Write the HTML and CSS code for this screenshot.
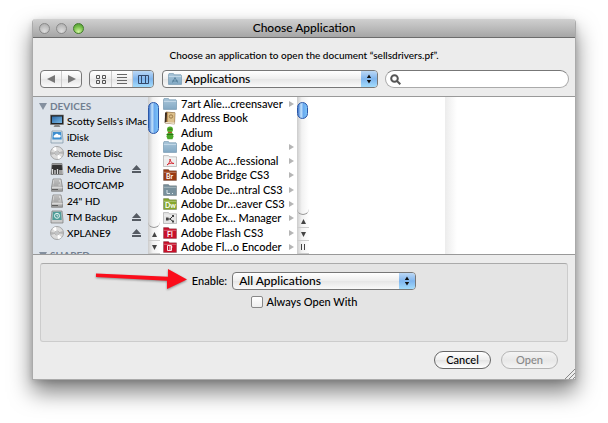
FILE: index.html
```html
<!DOCTYPE html>
<html lang="en">
<head>
    <meta charset="UTF-8">
    <meta name="viewport" content="width=device-width, initial-scale=1.0">
    <title>Choose Application</title>
    <link rel="stylesheet" href="styles.css">
</head>
<body>
    <!-- shared icons -->
    <svg class="defs" aria-hidden="true">
        <linearGradient id="folderFill" x2="0" y2="1"><stop stop-color="#a9c6da"/><stop offset="1" stop-color="#83a9c4"/></linearGradient>
        <linearGradient id="screenFill" x2="1" y2="1"><stop stop-color="#2c6aa8"/><stop offset="1" stop-color="#79b9e6"/></linearGradient>
        <linearGradient id="metalFill" x2="0" y2="1"><stop stop-color="#e4e4e4"/><stop offset="1" stop-color="#9c9c9c"/></linearGradient>
        <symbol id="folder" viewBox="0 0 14 12">
            <path d="M.5 2L1 .6h4.500l.7 1.200h6.800l.5.7v8.900H.5z" fill="url(#folderFill)" stroke="#7698b0" stroke-width=".7"/>
            <path d="M.8 3.400h12.400" stroke="#cfe1ed" stroke-width=".8"/>
        </symbol>
        <symbol id="disc" viewBox="0 0 14 14">
            <circle cx="7" cy="7" r="6.500" fill="#dcdcdc" stroke="#8d8d8d" stroke-width=".7"/>
            <path d="M7 7L2.500 2.700A6 6 0 0 1 6 1zM7 7l4.500 4.300A6 6 0 0 1 8 13z" fill="#fff"/>
            <path d="M7 7l5.700-2a6 6 0 0 1 .2 3zM7 7L1.300 9a6 6 0 0 1-.2-3z" fill="#b5b5b5"/>
            <circle cx="7" cy="7" r="2" fill="#eee" stroke="#999" stroke-width=".7"/>
            <circle cx="7" cy="7" r=".8" fill="#8b8f94"/>
        </symbol>
        <symbol id="drive" viewBox="0 0 14 14">
            <path d="M3 1h8l1.500 8.500v3.800h-11V9.500z" fill="url(#metalFill)" stroke="#777" stroke-width=".7"/>
            <path d="M2 9.800h10.500" stroke="#f4f4f4" stroke-width=".8"/>
            <path d="M4 3h5M4 5h6M3.500 7h5" stroke="#8b8b8b" stroke-width=".8"/>
            <path d="M2 11.500h6" stroke="#555" stroke-width=".9"/>
        </symbol>
        <symbol id="eject" viewBox="0 0 9 8">
            <path d="M4.500 0L9 5H0zM0 6h9v2H0z" fill="#555b63"/>
        </symbol>
        <symbol id="updown" viewBox="0 0 15 16">
            <path d="M7.500 3.500L9.700 7H5.300zM7.500 12.500L9.700 9H5.300z" fill="#111"/>
        </symbol>
        <symbol id="tile" viewBox="0 0 14 12">
            <path d="M.5 2.500V.6h5l1 1.200h7v9.700H.5z" stroke="rgba(0,0,0,.35)" stroke-width=".6"/>
            <path d="M.8 3.300h12.400" stroke="#fff" stroke-opacity=".5" stroke-width=".7"/>
        </symbol>
    </svg>

    <main class="window">
        <header class="titlebar">
            <div class="lights">
                <button class="light" aria-label="Close"></button>
                <button class="light" aria-label="Minimize"></button>
                <button class="light green" aria-label="Zoom"></button>
            </div>
            <h1>Choose Application</h1>
        </header>

        <p class="message">Choose an application to open the document “sellsdrivers.pf”.</p>

        <div class="toolbar">
            <div class="segments nav">
                <button aria-label="Back"><svg width="8" height="8"><path d="M8 0v8L0 4z" fill="#777"/></svg></button>
                <button aria-label="Forward"><svg width="8" height="8"><path d="M0 0v8l8-4z" fill="#777"/></svg></button>
            </div>
            <div class="segments views">
                <button aria-label="Icons"><svg width="10" height="9" fill="none" stroke="#555"><path d="M.5.5h3v3h-3zM6.500.5h3v3h-3zM.5 5.500h3v3h-3zM6.500 5.500h3v3h-3z"/></svg></button>
                <button aria-label="List"><svg width="10" height="10" stroke="#666"><path d="M0 .5h10M0 3.500h10M0 6.500h10M0 9.500h10"/></svg></button>
                <button class="on" aria-label="Columns"><svg width="11" height="9" fill="none" stroke="#34496b"><path d="M.5.5h10v8H.5zM3.500 0v9M7.500 0v9"/></svg></button>
            </div>
            <div class="popup location">
                <svg class="icon" viewBox="0 0 14 12"><use href="#folder"/><path d="M4.500 9.500l2.500-5 2.500 5M4 8h6" stroke="#4f7895" stroke-width=".8" fill="none"/></svg>
                <select aria-label="Location"><option>Applications</option></select>
                <svg class="cap"><use href="#updown"/></svg>
            </div>
            <label class="search">
                <svg width="11" height="11" fill="none" stroke="#555" stroke-width="2"><circle cx="4.500" cy="4.500" r="3.300"/><path d="M7 7l3.300 3.300"/></svg>
                <input type="search" aria-label="Search">
            </label>
        </div>

        <div class="browser">
            <nav class="sidebar">
                <h2><svg width="8" height="7"><path d="M0 0h8L4 7z" fill="#84909f"/></svg>DEVICES</h2>
                <ul>
                    <li>
                        <svg class="icon" viewBox="0 0 14 14"><rect x=".5" y="1" width="13" height="9.500" fill="#222" stroke="#777" stroke-width=".6"/><rect x="2" y="2.500" width="10" height="6.500" fill="url(#screenFill)"/><path d="M5 10.500h4l1.500 2.500h-7z" fill="#888"/></svg>
                        <span>Scotty Sells's iMac</span>
                    </li>
                    <li>
                        <svg class="icon" viewBox="0 0 14 14"><path d="M2 1h10l1 9v3H1v-3z" fill="#dbe3e9" stroke="#7890a3" stroke-width=".7"/><path d="M2.800 2h8.400l.5 7.500H2.300z" fill="#3f8fd0"/><path d="M4 7.500a1.500 1.500 0 0 1 1-2.500 2 2 0 0 1 3.700 0 1.400 1.400 0 0 1 1.300 2.500z" fill="#fff"/></svg>
                        <span>iDisk</span>
                    </li>
                    <li><svg class="icon"><use href="#disc"/></svg><span>Remote Disc</span></li>
                    <li>
                        <svg class="icon" viewBox="0 0 14 14"><path d="M2 1.500h10l1 11H1z" fill="#333" stroke="#888" stroke-width=".6"/><path d="M2 2.500h10" stroke="#999"/><path d="M2.500 12V7M5 12V8M7.500 12V7M10 12V8M12 12V8" stroke="#ddd" stroke-width="1.300"/></svg>
                        <span>Media Drive</span><button class="eject" aria-label="Eject Media Drive"><svg><use href="#eject"/></svg></button>
                    </li>
                    <li><svg class="icon"><use href="#drive"/></svg><span>BOOTCAMP</span></li>
                    <li><svg class="icon"><use href="#drive"/></svg><span>24" HD</span></li>
                    <li>
                        <svg class="icon" viewBox="0 0 14 14"><path d="M2 1h10l1 9v3H1v-3z" fill="#ccc" stroke="#777" stroke-width=".7"/><path d="M2.800 1.700h8.400l.5 8.300H2.300z" fill="#4e9c98"/><circle cx="7" cy="5.800" r="2.500" fill="none" stroke="#e5f5f3"/><path d="M7 4.500v1.500h1.200" stroke="#fff" stroke-width=".8" fill="none"/></svg>
                        <span>TM Backup</span><button class="eject" aria-label="Eject TM Backup"><svg><use href="#eject"/></svg></button>
                    </li>
                    <li><svg class="icon"><use href="#disc"/></svg><span>XPLANE9</span><button class="eject" aria-label="Eject XPLANE9"><svg><use href="#eject"/></svg></button></li>
                </ul>
                <h2><svg width="8" height="7"><path d="M0 0h8L4 7z" fill="#84909f"/></svg>SHARED</h2>
            </nav>
            <div class="scrollbar">
                <div class="track"><div class="thumb"></div></div>
                <button aria-label="Scroll sidebar up"><svg width="5" height="5"><path d="M0 5h5L2.500 0z"/></svg></button>
                <button aria-label="Scroll sidebar down"><svg width="5" height="5"><path d="M0 0h5L2.500 5z"/></svg></button>
            </div>

            <ul class="files">
                <li class="dir"><svg class="icon"><use href="#folder"/></svg><span>7art Alie…creensaver</span></li>
                <li><svg class="icon" viewBox="0 0 14 14"><path d="M3 1l9 .8-.5 11.200L2 12z" fill="#b98b4e" stroke="#72522b" stroke-width=".6"/><path d="M4.800 1.500l7 .6-.5 9.600-6.500-.6z" fill="#dcc08c"/><path d="M2 1.500l2 .2-.6 10-1.600-.3z" fill="#3b2c20"/><circle cx="8" cy="5.500" r="1.700" fill="none" stroke="#8d6a38" stroke-width=".8"/><path d="M2 12l9.500 1 .3-1.500-9-.6z" fill="#f3ead8"/></svg><span>Address Book</span></li>
                <li><svg class="icon" viewBox="0 0 14 14"><circle cx="7" cy="3.500" r="3" fill="#54ad2b"/><path d="M4.500 7C5 5.500 9 5.500 9.500 7l1 3.500-1 2.800h-5l-1-2.800z" fill="#4aa828"/><path d="M5 6.500h4" stroke="#c43d25" stroke-width=".8"/><path d="M3.500 8.500h7" stroke="#2b7515"/><path d="M6 2.600v1.200M8 2.600v1.200" stroke="#174b0a"/></svg><span>Adium</span></li>
                <li class="dir"><svg class="icon"><use href="#folder"/></svg><span>Adobe</span></li>
                <li class="dir"><svg class="icon" viewBox="0 0 14 12" fill="#eee"><use href="#tile"/><path d="M7 4c.5 3 2 4.500 4 4.500-3-.7-5.500 0-7 1.500C6 8.500 7.200 6.500 7 4z" fill="none" stroke="#d5202a" stroke-width=".9"/></svg><span>Adobe Ac…fessional</span></li>
                <li class="dir"><svg class="icon mark" viewBox="0 0 14 12" fill="#9a3a12"><use href="#tile"/><text x="3" y="9.500">Br</text></svg><span>Adobe Bridge CS3</span></li>
                <li class="dir"><svg class="icon" viewBox="0 0 14 12" fill="#78909c"><use href="#tile"/><path d="M4 6v3.500h3M9 9.500h1" stroke="#dfe8ed" fill="none"/></svg><span>Adobe De…ntral CS3</span></li>
                <li class="dir"><svg class="icon mark" viewBox="0 0 14 12" fill="#86a72c"><use href="#tile"/><text x="2" y="9.500">Dw</text></svg><span>Adobe Dr…eaver CS3</span></li>
                <li class="dir"><svg class="icon" viewBox="0 0 14 12" fill="#e5e5e5"><use href="#tile"/><path d="M4 7h3l3-3M7 7l3 2.500" stroke="#333" fill="none"/><path d="M3 5.500h2.500v3H3zM9 3h2v2H9zM9 8.500h2v2H9z" fill="#444"/></svg><span>Adobe Ex… Manager</span></li>
                <li class="dir"><svg class="icon mark" viewBox="0 0 14 12" fill="#c8102a"><use href="#tile"/><text x="4" y="9.500">Fl</text></svg><span>Adobe Flash CS3</span></li>
                <li class="dir"><svg class="icon" viewBox="0 0 14 12" fill="#c8102a"><use href="#tile"/><path d="M4.500 4.500h4v5h-4zM6 6h3.500M6 8h2" stroke="#fff" stroke-width=".9" fill="none"/></svg><span>Adobe Fl…o Encoder</span></li>
            </ul>
            <div class="scrollbar short">
                <div class="track"><div class="thumb"></div></div>
                <button aria-label="Scroll list up"><svg width="5" height="5"><path d="M0 5h5L2.500 0z"/></svg></button>
                <button aria-label="Scroll list down"><svg width="5" height="5"><path d="M0 0h5L2.500 5z"/></svg></button>
                <button aria-label="Resize column"><svg width="4" height="6"><path d="M0 0h1v6H0zM3 0h1v6H3z"/></svg></button>
            </div>
            <div class="column"></div>
            <div class="gutter"></div>
            <div class="column rest"></div>
        </div>

        <section class="options">
            <div class="row">
                <label for="enable">Enable:</label>
                <div class="popup">
                    <select id="enable"><option>All Applications</option></select>
                    <svg class="cap"><use href="#updown"/></svg>
                </div>
            </div>
            <label class="row check"><input type="checkbox">Always Open With</label>
            <svg class="arrow" width="94" height="26"><path d="M1 4.500L73 7.800V0l19 10.500L72 20v-8.200L1 8z" fill="#fb0d1b"/></svg>
        </section>

        <footer class="actions">
            <button class="push">Cancel</button>
            <button class="push" disabled>Open</button>
        </footer>
        <svg class="grip" width="10" height="10" stroke="#888"><path d="M0 10L10 0M4 10l6-6M8 10l2-2"/></svg>
    </main>
</body>
</html>
```
FILE: styles.css
```css
* {
    box-sizing: border-box;
}
body {
    margin: 0;
    padding: 19px 32px 44px;
    background-color: #fff;
    color: #000;
    font: 500 11px/14px Lato, "Noto Sans", sans-serif;
}
button, input, select {
    margin: 0;
    padding: 0;
    border: none;
    background: none;
    color: inherit;
    font: inherit;
}
h1, h2, p, ul {
    margin: 0;
    padding: 0;
    font: inherit;
    list-style: none;
}
svg {
    display: block;
    flex: none;
}
.defs {
    position: absolute;
    width: 0;
    height: 0;
}
.window {
    position: relative;
    background-color: #ececec;
    border: 1px solid #aaa;
    border-top: none;
    border-radius: 4px 4px 0 0;
    box-shadow: 0 12px 22px rgba(0, 0, 0, 0.5), 0 2px 6px rgba(0, 0, 0, 0.15);
}
.titlebar {
    display: grid;
    grid-template-columns: 1fr auto 1fr;
    align-items: center;
    height: 19px;
    padding: 0 6px;
    background: linear-gradient(#d0d0d0, #a6a6a6);
    border-bottom: 1px solid #6c6c6c;
    border-radius: 4px 4px 0 0;
}
.titlebar h1 {
    font-size: 12px;
}
.lights {
    display: flex;
    gap: 6px;
}
.light {
    width: 11px;
    height: 11px;
    border: 1px solid #8a8a8a;
    border-radius: 50%;
    background: radial-gradient(circle at 50% 80%, #ddd, #a9a9a9);
}
.light.green {
    border-color: #427b2c;
    background: radial-gradient(circle at 50% 85%, #d2f5a0, #72bd46 60%, #4e8f35);
}
.message {
    padding: 10px 0 8px;
    text-align: center;
    font-size: 10px;
}
.toolbar {
    display: flex;
    padding: 0 6px 8px 7px;
}
.segments, .popup {
    display: flex;
    align-items: center;
    height: 18px;
    border: 1px solid #777;
    border-radius: 4px;
    background: linear-gradient(#fff, #eee 50%, #e6e6e6 51%, #fafafa);
    overflow: hidden;
}
.segments button {
    display: flex;
    justify-content: center;
    align-items: center;
    width: 21px;
    height: 16px;
}
.segments button + button {
    border-left: 1px solid #ccc;
}
.segments .on {
    background: linear-gradient(#bcd8f5, #7fb5ee 50%, #a3dcfc);
}
.nav {
    margin-right: 7px;
}
.nav button {
    width: 20px;
}
.views {
    margin-right: 8px;
}
.popup select {
    flex: 1;
    height: 16px;
    padding-left: 6px;
    appearance: none;
    outline: none;
    font-size: 12px;
    line-height: 16px;
}
.popup .cap {
    width: 16px;
    height: 16px;
    background: linear-gradient(#bcd8f5, #7fb5ee 50%, #a3dcfc);
}
.location {
    flex: 214 0 0;
    margin-right: 7px;
}
.location .icon {
    margin-left: 5px;
}
.popup.location select {
    padding-left: 3px;
}
.search {
    display: flex;
    flex: 174 0 0;
    align-items: center;
    height: 18px;
    padding: 0 4px;
    background-color: #fff;
    border: 1px solid #aaa;
    border-top-color: #777;
    border-radius: 9px;
}
.search input {
    flex: 1;
    min-width: 0;
    outline: none;
}
.icon {
    width: 14px;
    height: 14px;
}
.browser {
    display: flex;
    height: 159px;
    background-color: #fff;
    border-top: 1px solid #999;
    border-bottom: 1px solid #999;
    overflow: hidden;
}
.sidebar {
    flex: none;
    width: 115px;
    padding-top: 2px;
    background-color: #dde3ea;
}
.sidebar h2 {
    display: flex;
    align-items: center;
    gap: 3px;
    height: 14px;
    padding-left: 6px;
    color: #727f90;
    font-size: 10px;
    font-weight: 700;
}
.sidebar li {
    display: flex;
    align-items: center;
    gap: 3px;
    height: 16px;
    padding: 0 7px 0 17px;
    font-size: 10px;
    white-space: nowrap;
}
.sidebar ul {
    padding-bottom: 7px;
}
.eject {
    margin-left: auto;
}
.eject svg {
    width: 9px;
    height: 8px;
}
.scrollbar {
    display: flex;
    flex: none;
    flex-direction: column;
    width: 12px;
    background: linear-gradient(to right, #ccc, #f2f2f2 40%, #fff);
}
.track {
    flex: 1;
    padding-top: 5px;
    border-bottom: 1px solid #999;
    border-radius: 0 0 6px 6px;
}
.thumb {
    width: 11px;
    height: 32px;
    border: 1px solid #2b57a8;
    border-radius: 6px;
    background: linear-gradient(to right, #3f78cd, #c3e2fb 35%, #69a9ef 60%, #7cc4f8);
}
.short .thumb {
    height: 17px;
}
.scrollbar button {
    display: flex;
    justify-content: center;
    align-items: center;
    height: 13px;
    border-bottom: 1px solid #ccc;
    fill: #444;
}
.files {
    display: grid;
    flex: none;
    grid-auto-rows: 1fr;
    width: 137px;
    padding-left: 3px;
}
.files li {
    display: flex;
    align-items: center;
    gap: 4px;
    min-height: 0;
    white-space: nowrap;
}
.files .dir::after {
    content: "";
    margin: 0 4px 0 auto;
    border: 3px solid transparent;
    border-left: 5px solid #b5b5b5;
    border-right: none;
}
.mark text {
    fill: #fff;
    font-size: 7px;
    font-weight: 700;
}
.column {
    flex: 137;
}
.gutter {
    width: 12px;
    background: linear-gradient(to right, #ececec, #fff);
}
.rest {
    flex: 118;
}
.options {
    position: relative;
    display: flex;
    flex-direction: column;
    align-items: center;
    gap: 5px;
    height: 79px;
    margin: 8px 7px 9px;
    padding-top: 8px;
    background-color: #e4e4e4;
    border: 1px solid #ccc;
    border-top-color: #aaa;
    border-radius: 3px;
}
.row {
    display: flex;
    align-items: center;
    gap: 5px;
}
.row .popup {
    width: 184px;
}
.check {
    gap: 4px;
}
.check input {
    width: 12px;
    height: 12px;
    appearance: none;
    border: 1px solid #888;
    border-radius: 2px;
    background: linear-gradient(#fff, #eee);
}
.arrow {
    position: absolute;
    top: 5px;
    left: 54px;
    filter: drop-shadow(0 1px 1px rgba(0, 0, 0, 0.4));
}
.actions {
    display: flex;
    justify-content: flex-end;
    gap: 10px;
    padding: 0 17px 10px;
}
.push {
    width: 57px;
    height: 18px;
    border: 1px solid #666;
    border-radius: 9px;
    background: linear-gradient(#fff, #eee 50%, #e4e4e4 51%, #fff);
}
.push:disabled {
    border-color: #b5b5b5;
    background: linear-gradient(#f4f4f4, #e8e8e8 50%, #f4f4f4);
    color: #888;
}
.grip {
    position: absolute;
    right: 0;
    bottom: 0;
}
```
